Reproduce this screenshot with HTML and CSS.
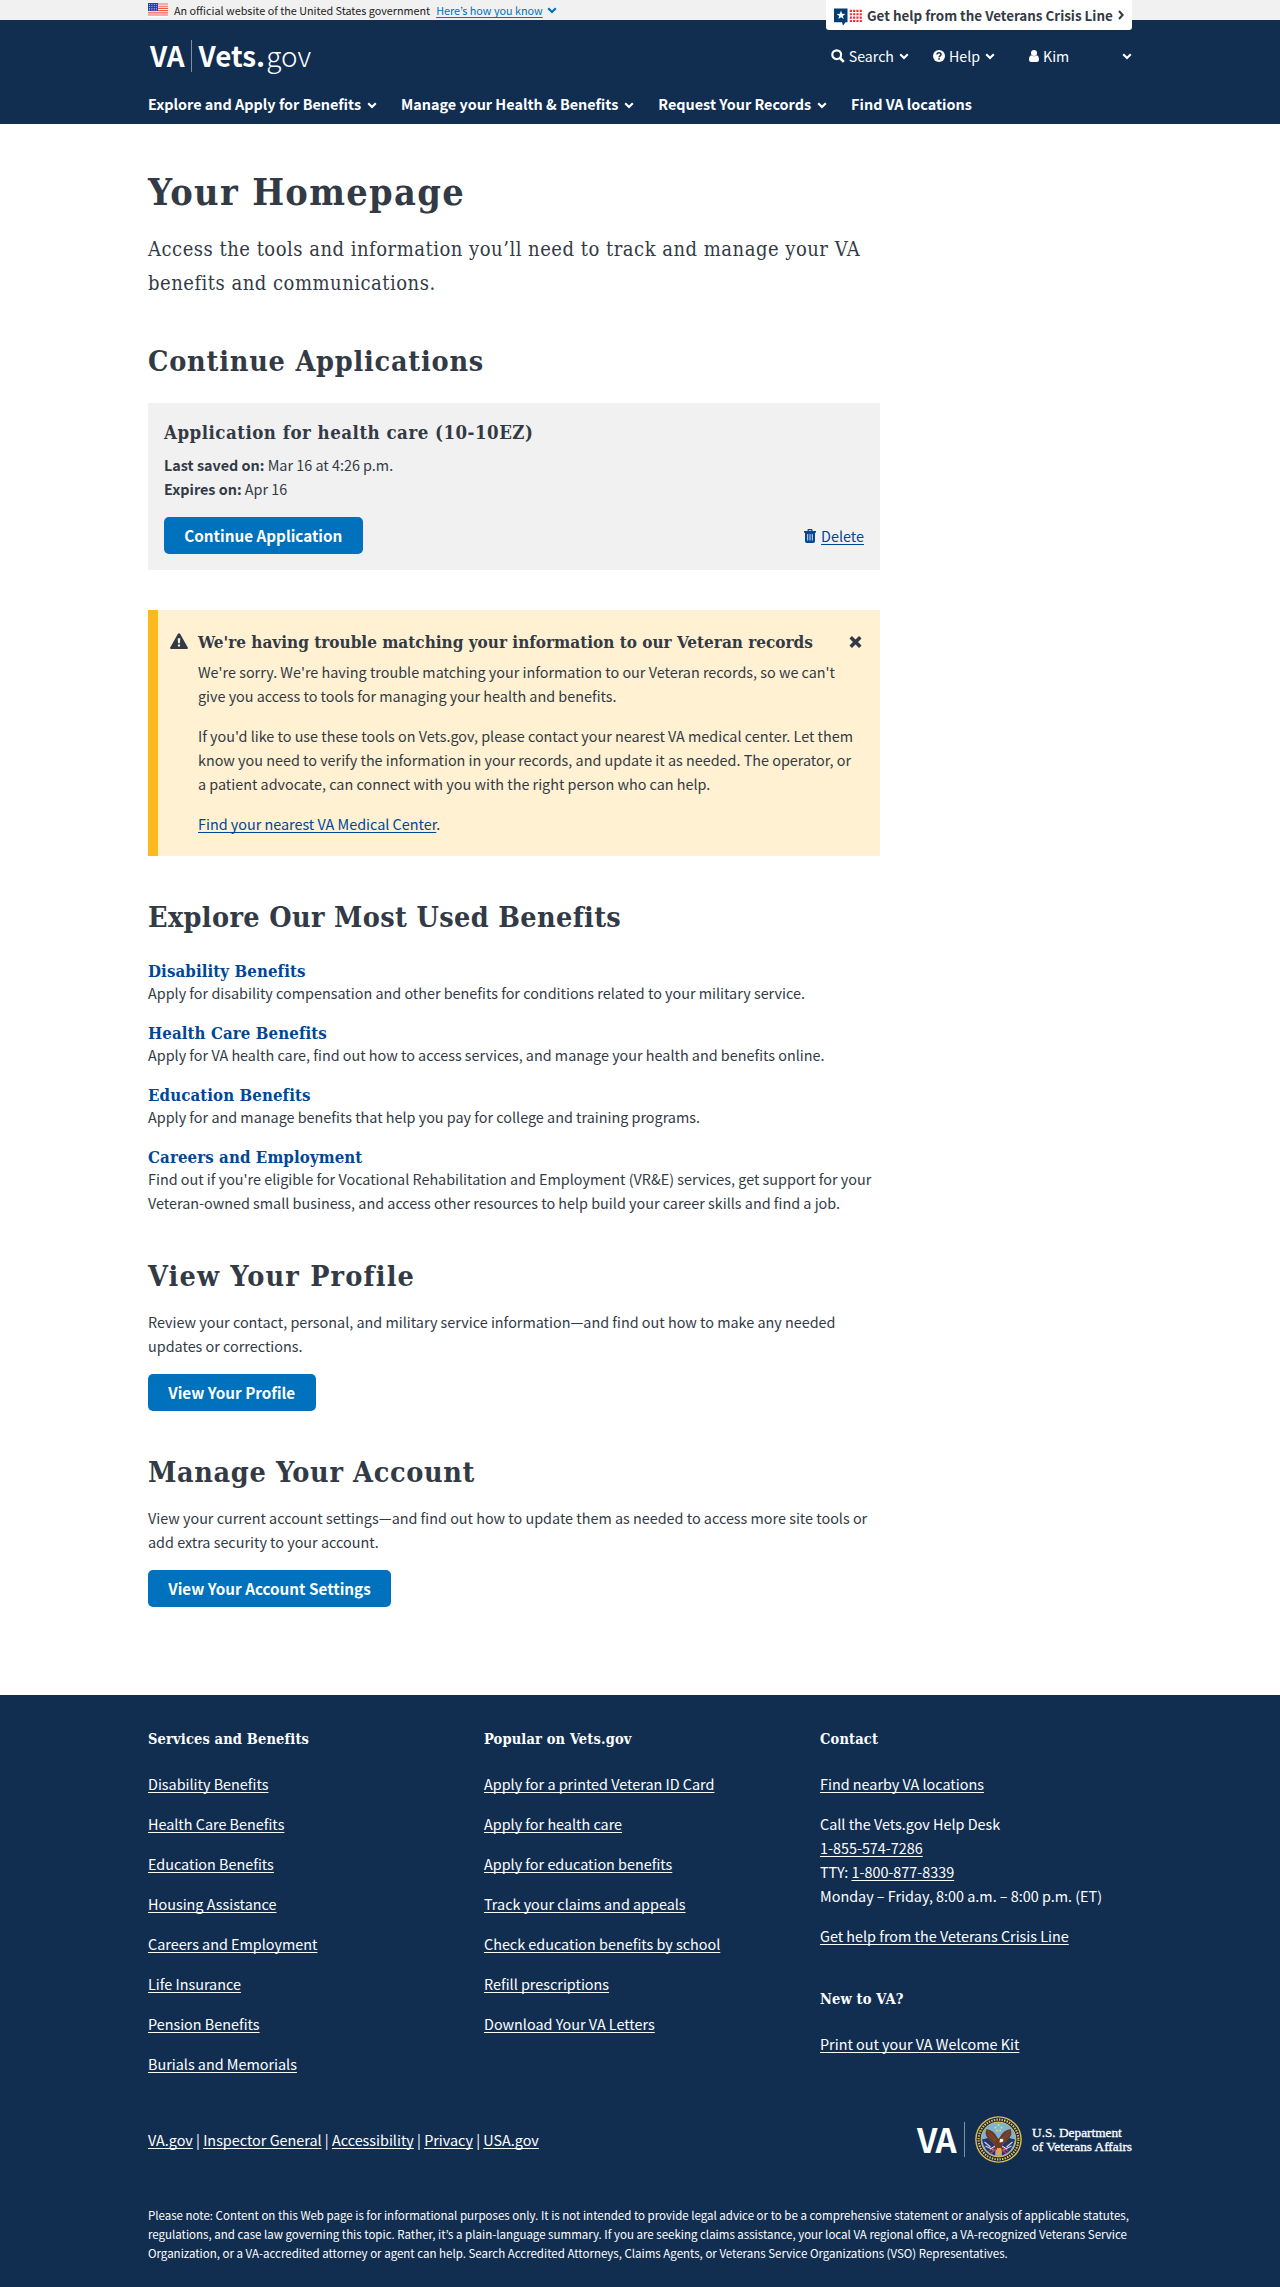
FILE: index.html
```html
<!DOCTYPE html>
<html lang="en">
<head>
<meta charset="utf-8">
<title>Your Homepage | Vets.gov</title>
<link rel="stylesheet" href="styles.css">
</head>
<body>
<svg width="0" height="0" class="sprite" aria-hidden="true">
  <symbol id="chev" viewBox="0 0 10 7"><path d="M1.2 1.2 5 5l3.8-3.8" fill="none" stroke="currentColor" stroke-width="2.1"/></symbol>
</svg>

<div class="banner">
  <div class="wrap banner-row">
    <svg class="flag" width="20" height="14" viewBox="0 0 20 14">
      <rect width="20" height="14" fill="#fff"/>
      <path d="M0 1h20M0 3.2h20M0 5.4h20M0 7.6h20M0 9.8h20M0 12h20" stroke="#ee5a46" stroke-width="1.15"/>
      <rect width="10" height="8" fill="#2c3fb5"/>
      <path d="M1 1.5h8M1 3.5h8M1 5.5h8M1 7h8" stroke="#c5cbf0" stroke-width=".8" stroke-dasharray="1 1.4"/>
    </svg>
    <span class="banner-text">An official website of the United States government</span>
    <a class="banner-link">Here’s how you know</a>
    <svg class="chev-s" width="10" height="7"><use href="#chev"/></svg>
  </div>
</div>

<header class="header">
  <div class="wrap header-in">
    <div class="crisis">
      <svg width="29" height="18" viewBox="0 0 29 18">
        <path d="M0 .5h13.5v13.7h-2L9 17.6 8 14.2H0z" fill="#003e73"/>
        <path d="M7 2.6 8.1 5.8 11.4 5.9 8.8 7.9 9.7 11.1 7 9.2 4.3 11.1 5.2 7.9 2.6 5.9 5.9 5.8z" fill="#fff"/>
        <path d="M15.8 2.9h12M15.8 6.3h12M15.8 9.6h12M15.8 13h12" stroke="#f22a30" stroke-width="2.1" stroke-dasharray="2.1 1.2"/>
      </svg>
      <span class="crisis-text">Get help from the Veterans Crisis Line</span>
      <svg width="6" height="10" viewBox="0 0 6 10"><path d="M1 1l3.6 4L1 9" fill="none" stroke="#323a45" stroke-width="2"/></svg>
    </div>
    <div class="head-row">
      <div class="logo"><span class="logo-va">VA</span><i class="logo-bar"></i><span class="logo-vets">Vets.</span><span class="logo-gov">gov</span></div>
      <div class="tools">
        <div class="tool tool-search">
          <svg width="14" height="14" viewBox="0 0 14 14"><circle cx="5.7" cy="5.7" r="4.4" fill="none" stroke="#fff" stroke-width="2.2"/><path d="M9 9l3.8 3.8" stroke="#fff" stroke-width="2.6"/></svg>
          <span>Search</span><svg class="chev" width="10" height="7"><use href="#chev"/></svg>
        </div>
        <div class="tool tool-help">
          <svg width="12" height="12" viewBox="0 0 12 12"><circle cx="6" cy="6" r="6" fill="#fff"/><path d="M4 4.6C4 3.3 5 2.8 6 2.8s2 .6 2 1.700c0 1.400-1.900 1.300-1.900 2.800" fill="none" stroke="#112e51" stroke-width="1.5"/><rect x="5.3" y="8.2" width="1.6" height="1.5" fill="#112e51"/></svg>
          <span>Help</span><svg class="chev" width="10" height="7"><use href="#chev"/></svg>
        </div>
        <div class="tool tool-user">
          <svg width="10" height="12" viewBox="0 0 10 12"><circle cx="5" cy="3" r="3" fill="#fff"/><path d="M2.2 5.2C.7 5.600 0 7.200 0 9.500 0 11.100.8 12 2 12H8C9.200 12 10 11.100 10 9.500 10 7.200 9.300 5.600 7.800 5.200 6.200 6.700 3.800 6.700 2.200 5.200Z" fill="#fff"/></svg>
          <span>Kim</span><svg class="chev chev-end" width="10" height="7"><use href="#chev"/></svg>
        </div>
      </div>
    </div>
    <nav class="nav">
      <a><span>Explore and Apply for Benefits</span><svg width="10" height="7"><use href="#chev"/></svg></a>
      <a><span>Manage your Health &amp; Benefits</span><svg width="10" height="7"><use href="#chev"/></svg></a>
      <a><span>Request Your Records</span><svg width="10" height="7"><use href="#chev"/></svg></a>
      <a><span>Find VA locations</span></a>
    </nav>
  </div>
</header>

<main class="wrap">
  <div class="main">
    <h1>Your Homepage</h1>
    <p class="lead">Access the tools and information you’ll need to track and manage your VA<br>benefits and communications.</p>

    <h2 class="h2-apps">Continue Applications</h2>
    <section class="card">
      <h3>Application for health care (10-10EZ)</h3>
      <p><b>Last saved on:</b> Mar 16 at 4:26 p.m.<br><b>Expires on:</b> Apr 16</p>
      <div class="card-row">
        <a class="btn">Continue Application</a>
        <a class="delete">
          <svg width="12" height="14" viewBox="0 0 12 14"><path d="M0 2h3.500V1q0-1 1-1h3q1 0 1 1v1H12v1.800H11V12q0 2-1.800 2H2.800Q1 14 1 12V3.800H0zM4.800 1.300V2h2.400v-.7z" fill="#004795"/><path d="M3.700 5v6.500M6 5v6.500M8.300 5v6.500" stroke="#f1f1f1" stroke-width=".9"/></svg>
          <span class="u">Delete</span>
        </a>
      </div>
    </section>

    <section class="alert">
      <svg class="alert-icon" width="18" height="16" viewBox="0 0 18 16"><path d="M9 .2q.8 0 1.200.7l7.600 13.500q.5 1.500-1 1.600H1.200q-1.500-.1-1-1.600L7.800.9Q8.200.2 9 .2z" fill="#323a45"/><path d="M7.700 5.300h2.600l-.4 5H8.100zM7.900 11.400h2.200v2.100H7.900z" fill="#fff1d2"/></svg>
      <div class="alert-body">
        <div class="alert-head">
          <h3>We're having trouble matching your information to our Veteran records</h3>
          <svg width="13" height="12" viewBox="0 0 13 12"><path d="M1.700 1.300l9.600 9.400M11.300 1.300 1.700 10.700" stroke="#323a45" stroke-width="3.600"/></svg>
        </div>
        <p>We're sorry. We're having trouble matching your information to our Veteran records, so we can't<br>give you access to tools for managing your health and benefits.</p>
        <p>If you'd like to use these tools on Vets.gov, please contact your nearest VA medical center. Let them<br>know you need to verify the information in your records, and update it as needed. The operator, or<br>a patient advocate, can connect with you with the right person who can help.</p>
        <p><a class="u">Find your nearest VA Medical Center</a>.</p>
      </div>
    </section>

    <h2 class="h2-list">Explore Our Most Used Benefits</h2>
    <dl class="benefits">
      <dt>Disability Benefits</dt><dd>Apply for disability compensation and other benefits for conditions related to your military service.</dd>
      <dt>Health Care Benefits</dt><dd>Apply for VA health care, find out how to access services, and manage your health and benefits online.</dd>
      <dt>Education Benefits</dt><dd>Apply for and manage benefits that help you pay for college and training programs.</dd>
      <dt>Careers and Employment</dt><dd>Find out if you're eligible for Vocational Rehabilitation and Employment (VR&amp;E) services, get support for your<br>Veteran-owned small business, and access other resources to help build your career skills and find a job.</dd>
    </dl>

    <h2 class="h2-text h2-profile">View Your Profile</h2>
    <p>Review your contact, personal, and military service information—and find out how to make any needed<br>updates or corrections.</p>
    <a class="btn">View Your Profile</a>

    <h2 class="h2-text h2-account">Manage Your Account</h2>
    <p>View your current account settings—and find out how to update them as needed to access more site tools or<br>add extra security to your account.</p>
    <a class="btn">View Your Account Settings</a>
  </div>
</main>

<footer class="footer">
  <div class="wrap">
    <div class="cols">
      <div>
        <h4>Services and Benefits</h4>
        <ul>
          <li><a>Disability Benefits</a></li>
          <li><a>Health Care Benefits</a></li>
          <li><a>Education Benefits</a></li>
          <li><a>Housing Assistance</a></li>
          <li><a>Careers and Employment</a></li>
          <li><a>Life Insurance</a></li>
          <li><a>Pension Benefits</a></li>
          <li><a>Burials and Memorials</a></li>
        </ul>
      </div>
      <div>
        <h4>Popular on Vets.gov</h4>
        <ul>
          <li><a>Apply for a printed Veteran ID Card</a></li>
          <li><a>Apply for health care</a></li>
          <li><a>Apply for education benefits</a></li>
          <li><a>Track your claims and appeals</a></li>
          <li><a>Check education benefits by school</a></li>
          <li><a>Refill prescriptions</a></li>
          <li><a>Download Your VA Letters</a></li>
        </ul>
      </div>
      <div>
        <h4>Contact</h4>
        <ul>
          <li><a>Find nearby VA locations</a></li>
          <li>Call the Vets.gov Help Desk<br><a>1-855-574-7286</a><br>TTY: <a>1-800-877-8339</a><br>Monday – Friday, 8:00 a.m. – 8:00 p.m. (ET)</li>
          <li><a>Get help from the Veterans Crisis Line</a></li>
        </ul>
        <h4 class="h4-second">New to VA?</h4>
        <ul>
          <li><a>Print out your VA Welcome Kit</a></li>
        </ul>
      </div>
    </div>
    <div class="legal">
      <div><a>VA.gov</a> | <a>Inspector General</a> | <a>Accessibility</a> | <a>Privacy</a> | <a>USA.gov</a></div>
      <div class="dept">
        <span class="dept-va">VA</span>
        <i class="dept-bar"></i>
        <svg width="47" height="47" viewBox="0 0 47 47">
          <circle cx="23.500" cy="23.500" r="23.300" fill="#e3bd4f"/>
          <circle cx="23.500" cy="23.500" r="21.900" fill="#14233f"/>
          <circle cx="23.500" cy="23.500" r="19.900" fill="none" stroke="#d9bf62" stroke-width="2.200" stroke-dasharray="1.500 1.100"/>
          <circle cx="23.500" cy="23.500" r="17.400" fill="#7fb2d6" stroke="#e3bd4f" stroke-width="1"/>
          <path d="M7 23.500 13 22l8 8-1 9.500Q9 36 7 23.500z" fill="#26366b"/>
          <path d="M40 23.500 34 22l-8 8 1 9.500Q38 36 40 23.500z" fill="#26366b"/>
          <path d="M9.500 26l6 5M10.500 30l8 4M37.500 26l-6 5M36.500 30l-8 4" stroke="#cfd6ea" stroke-width="1.100"/>
          <path d="M14 35l6-4M16 37l5-4M33 35l-6-4M31 37l-5-4" stroke="#c8405a" stroke-width="1.500"/>
          <path d="M15 33l5-3M32 33l-5-3" stroke="#f3ede2" stroke-width="1"/>
          <path d="M11.500 13q7 1 10.500 8l1.500 2 1.500-2q3.500-7 10.500-8 2.500 5-1.500 9.500l-6.500 6-1.500 5.500h-5l-1.500-5.500-6.500-6Q9 18 11.500 13z" fill="#6b3a22"/>
          <path d="M13 15l8 9M12.500 18l8 8M34 15l-8 9M34.500 18l-8 8" stroke="#8f5a38" stroke-width=".8"/>
          <path d="M25 23q2.500-1 3.500 1l-1 2-3 .5z" fill="#f3ede2"/>
          <path d="M22 32h4l1 4.500-3.500 3.500-2.500-3z" fill="#e0a648"/>
          <g fill="#f0d35e"><circle cx="23.500" cy="9" r="1"/><circle cx="20.500" cy="11.500" r="1"/><circle cx="26.500" cy="11.500" r="1"/><circle cx="22" cy="14.500" r="1"/><circle cx="25.200" cy="14.500" r="1"/></g>
        </svg>
        <div class="dept-name">U.S. Department<br>of Veterans Affairs</div>
      </div>
    </div>
    <p class="note">Please note: Content on this Web page is for informational purposes only. It is not intended to provide legal advice or to be a comprehensive statement or analysis of applicable statutes,<br>regulations, and case law governing this topic. Rather, it’s a plain-language summary. If you are seeking claims assistance, your local VA regional office, a VA-recognized Veterans Service<br>Organization, or a VA-accredited attorney or agent can help. Search Accredited Attorneys, Claims Agents, or Veterans Service Organizations (VSO) Representatives.</p>
  </div>
</footer>
</body>
</html>
```
FILE: styles.css
```css
* { box-sizing: border-box; }
body {
  margin: 0;
  background: #fff;
  color: #323a45;
  font: 14.38px/24px "Noto Sans CJK KR", "Noto Sans", sans-serif;
}
h1, h2, h3, h4, p, ul, dl, dd { margin: 0; padding: 0; }
h1, h2, h3, h4, dt, .lead {
  font-family: "DejaVu Serif Condensed", "DejaVu Serif", serif;
  font-stretch: condensed;
  white-space: nowrap;
}
p, dd, li { white-space: nowrap; }
.sprite { position: absolute; }
.wrap { width: 984px; margin: 0 auto; }
svg { display: block; flex: none; }

.banner { background: #f1f1f1; height: 20px; }
.banner-row { display: flex; align-items: center; height: 20px; font-size: 10.8px; line-height: 20px; color: #212121; }
.banner-text { margin-left: 6px; }
.banner-link { margin-left: 6px; color: #0071bc; text-decoration: underline; text-underline-offset: 2px; text-decoration-skip-ink: none; }
.chev-s { margin-left: 4px; color: #0071bc; }

.header { background: #112e51; height: 104px; color: #fff; }
.header-in { position: relative; }
.crisis {
  position: absolute; right: 0; top: -20px;
  width: 306px; height: 30px; padding-left: 8px;
  display: flex; align-items: center;
  background: #fff; border-radius: 0 0 3px 3px;
  color: #323a45; font-weight: bold; font-size: 13.4px; line-height: 28px;
}
.crisis svg:first-child { margin-top: 4px; }
.crisis-text { margin: 0 5px 1px 4px; white-space: nowrap; }
.head-row { display: flex; justify-content: space-between; padding-top: 15px; height: 72px; }
.logo { display: flex; height: 40px; line-height: 40px; font-size: 27.8px; padding-left: 2px; align-items: center; }
.logo-va, .logo-vets { font-weight: bold; }
.logo-bar { width: 1px; height: 32px; background: #8190a4; margin: 1px 7px 0 6px; }
.logo-gov { font-weight: 300; margin-left: 1px; }
.tools { display: flex; margin-top: 9px; height: 24px; }
.tool { display: flex; align-items: center; font-size: 14.2px; }
.tool span { margin-left: 4px; }
.chev { margin-left: 5px; }
.tool-help { margin-left: 24px; }
.tool-user { margin-left: 34px; width: 103px; }
.chev-end { margin-left: auto; }
.nav { display: flex; line-height: 24px; font-weight: bold; font-size: 14.4px; }
.nav a { display: flex; align-items: center; margin-right: 24px; }
.nav svg { margin-left: 6px; margin-top: 2px; }

.main { width: 732px; padding: 44px 0 88px; }
h1 { font-size: 37.5px; line-height: 48px; margin-bottom: 16px; letter-spacing: 1.35px; }
.lead { font-size: 20px; line-height: 34px; letter-spacing: .5px; }
h2 { font-size: 28.5px; line-height: 36px; margin: 43px 0 24px; }
.h2-apps { letter-spacing: .79px; }
h3 { font-size: 17px; line-height: 26px; }
.card { background: #f1f1f1; height: 167px; padding: 17px 16px 0; }
.card h3 { font-size: 18.5px; letter-spacing: .5px; }
.card p { margin: 7px 0 16px; }
.card-row { display: flex; justify-content: space-between; align-items: center; }
.btn {
  display: inline-block; vertical-align: top;
  height: 37px; padding: 0 20.3px; line-height: 37px;
  background: #0071bc; color: #fff; border-radius: 5px;
  font-weight: bold; font-size: 15.25px;
}
.delete { display: flex; align-items: center; gap: 5px; color: #004795; }
.u, .footer a { text-decoration: underline; text-underline-offset: 2px; text-decoration-thickness: 1px; text-decoration-skip-ink: none; }
a.u { color: #004795; }
.alert { display: flex; margin-top: 40px; height: 246px; padding: 19px 18px 0 12px; background: #fff1d2; border-left: 10px solid #fdb81e; }
.alert-icon { margin: 4px 10px 0 0; }
.alert-body { flex: 1; }
.alert-head { display: flex; justify-content: space-between; align-items: center; margin-bottom: 5px; }
.alert p { margin-bottom: 16px; }
.h2-list { margin: 43px 0 26px; letter-spacing: .36px; }
.benefits dt { font-weight: bold; font-size: 16.7px; line-height: 20px; letter-spacing: .1px; color: #004795; }
.benefits dd { margin-bottom: 18px; }
.benefits dd:last-child { margin-bottom: 0; }
.h2-text { margin: 43px 0 16px; }
.h2-text + p { margin-bottom: 16px; }
.h2-profile { letter-spacing: 1.17px; }
.h2-account { letter-spacing: .64px; }

.footer { background: #112e51; color: #fff; height: 592px; padding-top: 34px; }
.cols { display: grid; grid-template-columns: 336px 336px 1fr; height: 347px; }
h4 { font-size: 14.5px; line-height: 20px; margin-bottom: 23px; letter-spacing: .15px; }
ul { list-style: none; }
li { margin-bottom: 16px; }
.h4-second { margin-top: 41px; }
.legal { display: flex; justify-content: space-between; align-items: center; height: 47px; margin-top: 40px; white-space: nowrap; }
.dept { display: flex; align-items: center; }
.dept-va { font-weight: bold; font-size: 33px; line-height: 47px; letter-spacing: -1.5px; }
.dept-bar { width: 1px; height: 35px; margin: 0 10px 0 9px; background: #8190a4; }
.dept-name { margin-left: 10px; font: 13.3px/13.5px "Liberation Serif", serif; -webkit-text-stroke: .3px #fff; }
.note { margin-top: 43px; font-size: 11.5px; line-height: 19.2px; }
```
